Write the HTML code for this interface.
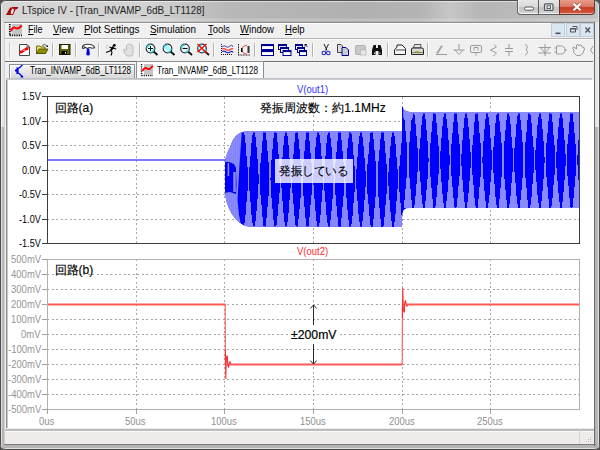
<!DOCTYPE html>
<html><head><meta charset="utf-8">
<style>
*{margin:0;padding:0;box-sizing:border-box}
html,body{width:600px;height:450px;overflow:hidden;background:#4a4a4a}
body{position:relative;font-family:"Liberation Sans",sans-serif;}
.a{position:absolute}
.t{position:absolute;white-space:pre;transform-origin:0 0}
</style></head><body>
<div class="a" style="left:0;top:0;width:600px;height:450px;background:linear-gradient(90deg,#d6d6d6,#d2d2d2 25%,#b8b8b8 38%,#b0b0b0 60%,#b4b4b4 70%,#c6c6c6 75%,#b6b6b6 80%,#bcbcbc 90%,#c4c4c4);border-radius:6px"></div>
<div class="a" style="left:0;top:0;width:600px;height:450px;background:linear-gradient(rgba(255,255,255,0) 0px,rgba(255,255,255,0) 18px,rgba(255,255,255,0.3) 20px,rgba(255,255,255,0) 21px);"></div>
<div class="a" style="left:0;top:22px;width:600px;height:428px;background:linear-gradient(#e4e4e4,#e4e4e4 105px,#b6b6b6 105px);border-radius:0 0 6px 6px"></div>
<div class="a" style="left:0;top:0;width:600px;height:450px;border:1px solid #4c4c4c;border-radius:6px"></div>
<div class="a" style="left:1px;top:1px;width:598px;height:448px;border:1px solid rgba(255,255,255,0.55);border-radius:5px"></div>
<div class="a" style="left:4px;top:22px;width:591px;height:423px;border:1px solid #6e6e6e;border-left-color:#d0d0d0;border-top-color:#8e8e8e"></div><div class="a" style="left:5px;top:22px;width:1px;height:423px;background:#707070"></div>
<div class="a" style="left:5px;top:23px;width:590px;height:422px;background:#f0f0f0"></div>
<div class="a" style="left:5px;top:23px;width:590px;height:1px;background:#fbfbfb"></div>
<div class="a" style="left:5px;top:38px;width:590px;height:1px;background:#b4b4b4"></div>
<div class="a" style="left:5px;top:39px;width:590px;height:1px;background:#fafafa"></div>
<div class="a" style="left:5px;top:61px;width:588px;height:1px;background:#6e6e6e"></div>
<div class="a" style="left:5px;top:62px;width:590px;height:1px;background:#fafafa"></div>
<div class="a" style="left:9px;top:64px;width:126px;height:14px;background:linear-gradient(#f6f6f6,#e6e6e6 50%,#d8d8d8);border:1px solid #8a8e96;border-bottom:none;box-shadow:inset 1px 1px 0 #fff"></div>
<div class="a" style="left:136px;top:61px;width:128px;height:17px;background:#fff;border:1px solid #8a8e96;border-bottom:none"></div>
<div class="a" style="left:6px;top:78px;width:586px;height:2px;background:linear-gradient(#b8bcc0,#d0d3d6)"></div>
<div class="a" style="left:6px;top:80px;width:588px;height:348px;background:#fff"></div>
<div class="a" style="left:6px;top:80px;width:1px;height:348px;background:#8a8a8a"></div><div class="a" style="left:7px;top:80px;width:1px;height:348px;background:#cacaca"></div>
<div class="a" style="left:594px;top:22px;width:1px;height:424px;background:#6a6a6a"></div>
<div class="a" style="left:5px;top:428px;width:589px;height:1px;background:#ececec"></div>
<div class="a" style="left:5px;top:429px;width:589px;height:2px;background:linear-gradient(#b4b4b4,#c4c4c4)"></div>
<div class="a" style="left:5px;top:431px;width:589px;height:1px;background:#f8f8f8"></div>
<div class="a" style="left:5px;top:432px;width:589px;height:12px;background:#efebeb"></div>
<div class="a" style="left:4px;top:444px;width:592px;height:1px;background:#7a7a7a"></div>
<div class="a" style="left:1px;top:446px;width:598px;height:2px;background:#b4b4b4"></div>
<div class="a" style="left:579px;top:430px;width:1px;height:14px;background:#d4d4d4"></div>
<!-- mdi buttons -->
<div class="a" style="left:551px;top:23px;width:14px;height:14px;background:#dbe6f3;border:1px solid #c0ccd8"></div>
<div class="a" style="left:566px;top:23px;width:14px;height:14px;background:#dbe6f3;border:1px solid #c0ccd8"></div>
<div class="a" style="left:580px;top:23px;width:14px;height:14px;background:#dbe6f3;border:1px solid #c0ccd8"></div>
<!-- caption buttons -->
<div class="a" style="left:517px;top:0px;width:43px;height:15px;background:linear-gradient(#e6e6e6,#dadada 45%,#c4c4c4 55%,#d4d4d4);border:1px solid #606060;border-top:none;border-radius:0 0 0 4px;box-shadow:inset 1px -1px 0 #f4f4f4"></div>
<div class="a" style="left:538px;top:0px;width:1px;height:14px;background:#606060"></div>
<div class="a" style="left:559px;top:0px;width:36px;height:15px;background:linear-gradient(#e89a8a,#dc7a68 45%,#c83c22 55%,#d05a40);border:1px solid #5a3a34;border-top:none;border-radius:0 0 4px 0;box-shadow:inset 0 -1px 0 #f0b0a0"></div>
<svg class="a" style="left:0;top:0" width="600" height="450" viewBox="0 0 600 450">
<line x1="48" y1="121.5" x2="579" y2="121.5" stroke="#a8a8a8" stroke-width="1" stroke-dasharray="2 2 2 3" stroke-dashoffset="5"/>
<line x1="48" y1="145.5" x2="579" y2="145.5" stroke="#a8a8a8" stroke-width="1" stroke-dasharray="2 2 2 3" stroke-dashoffset="5"/>
<line x1="48" y1="170.5" x2="579" y2="170.5" stroke="#a8a8a8" stroke-width="1" stroke-dasharray="2 2 2 3" stroke-dashoffset="5"/>
<line x1="48" y1="194.5" x2="579" y2="194.5" stroke="#a8a8a8" stroke-width="1" stroke-dasharray="2 2 2 3" stroke-dashoffset="5"/>
<line x1="48" y1="219.5" x2="579" y2="219.5" stroke="#a8a8a8" stroke-width="1" stroke-dasharray="2 2 2 3" stroke-dashoffset="5"/>
<line x1="136.5" y1="97" x2="136.5" y2="243" stroke="#a8a8a8" stroke-width="1" stroke-dasharray="2 3 2 2"/>
<line x1="224.5" y1="97" x2="224.5" y2="243" stroke="#a8a8a8" stroke-width="1" stroke-dasharray="2 3 2 2"/>
<line x1="313.5" y1="97" x2="313.5" y2="243" stroke="#a8a8a8" stroke-width="1" stroke-dasharray="2 3 2 2"/>
<line x1="402.5" y1="97" x2="402.5" y2="243" stroke="#a8a8a8" stroke-width="1" stroke-dasharray="2 3 2 2"/>
<line x1="490.5" y1="97" x2="490.5" y2="243" stroke="#a8a8a8" stroke-width="1" stroke-dasharray="2 3 2 2"/>
<line x1="136.5" y1="259" x2="136.5" y2="409" stroke="#a8a8a8" stroke-width="1" stroke-dasharray="2 3 2 2"/>
<line x1="224.5" y1="259" x2="224.5" y2="409" stroke="#a8a8a8" stroke-width="1" stroke-dasharray="2 3 2 2"/>
<line x1="313.5" y1="259" x2="313.5" y2="409" stroke="#a8a8a8" stroke-width="1" stroke-dasharray="2 3 2 2"/>
<line x1="402.5" y1="259" x2="402.5" y2="409" stroke="#a8a8a8" stroke-width="1" stroke-dasharray="2 3 2 2"/>
<line x1="490.5" y1="259" x2="490.5" y2="409" stroke="#a8a8a8" stroke-width="1" stroke-dasharray="2 3 2 2"/>
<line x1="48" y1="274.5" x2="579" y2="274.5" stroke="#a8a8a8" stroke-width="1" stroke-dasharray="2 2 2 3" stroke-dashoffset="5"/>
<line x1="48" y1="289.5" x2="579" y2="289.5" stroke="#a8a8a8" stroke-width="1" stroke-dasharray="2 2 2 3" stroke-dashoffset="5"/>
<line x1="48" y1="304.5" x2="579" y2="304.5" stroke="#a8a8a8" stroke-width="1" stroke-dasharray="2 2 2 3" stroke-dashoffset="5"/>
<line x1="48" y1="319.5" x2="579" y2="319.5" stroke="#a8a8a8" stroke-width="1" stroke-dasharray="2 2 2 3" stroke-dashoffset="5"/>
<line x1="48" y1="334.5" x2="579" y2="334.5" stroke="#a8a8a8" stroke-width="1" stroke-dasharray="2 2 2 3" stroke-dashoffset="5"/>
<line x1="48" y1="349.5" x2="579" y2="349.5" stroke="#a8a8a8" stroke-width="1" stroke-dasharray="2 2 2 3" stroke-dashoffset="5"/>
<line x1="48" y1="364.5" x2="579" y2="364.5" stroke="#a8a8a8" stroke-width="1" stroke-dasharray="2 2 2 3" stroke-dashoffset="5"/>
<line x1="48" y1="379.5" x2="579" y2="379.5" stroke="#a8a8a8" stroke-width="1" stroke-dasharray="2 2 2 3" stroke-dashoffset="5"/>
<line x1="48" y1="394.5" x2="579" y2="394.5" stroke="#a8a8a8" stroke-width="1" stroke-dasharray="2 2 2 3" stroke-dashoffset="5"/>
<defs><clipPath id="envA"><path d="M225,159.5 L228,151 L230,147 L231.3,143.5 L233,139.6 L235,137 L236.7,135 L239.3,133.3 L241,132.3 L244,131.6 L249,131 L402,131 L402,227 L248.8,226.8 L244,225.8 L239.2,222.6 L236,219.4 L232,214.6 L228.8,208.2 L226.4,201.8 L225,195 Z"/></clipPath><clipPath id="envB"><path d="M402,131 L402,107 L403,107 L404,110 L407,111 L410,112 L579,112 L579,208 L412,208 L406,208.5 L403.5,210.5 L402.5,214 L402,227 Z"/></clipPath></defs>
<g clip-path="url(#envA)"><path d="M225,159.5 L228,151 L230,147 L231.3,143.5 L233,139.6 L235,137 L236.7,135 L239.3,133.3 L241,132.3 L244,131.6 L249,131 L402,131 L402,227 L248.8,226.8 L244,225.8 L239.2,222.6 L236,219.4 L232,214.6 L228.8,208.2 L226.4,201.8 L225,195 Z" fill="#0000ff"/><path fill="#8a8aff" d="M244,131 h1 v4 h-1 Z M244,223 h1 v4 h-1 Z M245,131 h1 v12 h-1 Z M245,215 h1 v12 h-1 Z M246,131 h1 v25 h-1 Z M246,202 h1 v25 h-1 Z M247,131 h1 v36 h-1 Z M247,191 h1 v36 h-1 Z M248,131 h1 v48 h-1 Z M248,179 h1 v48 h-1 Z M249,131 h1 v36 h-1 Z M249,191 h1 v36 h-1 Z M250,131 h1 v25 h-1 Z M250,202 h1 v25 h-1 Z M251,131 h1 v12 h-1 Z M251,215 h1 v12 h-1 Z M252,131 h1 v4 h-1 Z M252,223 h1 v4 h-1 Z M255,131 h1 v6 h-1 Z M255,221 h1 v6 h-1 Z M256,131 h1 v16 h-1 Z M256,211 h1 v16 h-1 Z M257,131 h1 v28 h-1 Z M257,199 h1 v28 h-1 Z M258,131 h1 v43 h-1 Z M258,184 h1 v43 h-1 Z M259,131 h1 v48 h-1 Z M259,179 h1 v48 h-1 Z M260,131 h1 v32 h-1 Z M260,195 h1 v32 h-1 Z M261,131 h1 v22 h-1 Z M261,205 h1 v22 h-1 Z M262,131 h1 v10 h-1 Z M262,217 h1 v10 h-1 Z M263,131 h1 v1 h-1 Z M263,226 h1 v1 h-1 Z M266,131 h1 v9 h-1 Z M266,218 h1 v9 h-1 Z M267,131 h1 v20 h-1 Z M267,207 h1 v20 h-1 Z M268,131 h1 v31 h-1 Z M268,196 h1 v31 h-1 Z M269,131 h1 v48 h-1 Z M269,179 h1 v48 h-1 Z M270,131 h1 v47 h-1 Z M270,180 h1 v47 h-1 Z M271,131 h1 v29 h-1 Z M271,198 h1 v29 h-1 Z M272,131 h1 v18 h-1 Z M272,209 h1 v18 h-1 Z M273,131 h1 v7 h-1 Z M273,220 h1 v7 h-1 Z M276,131 h1 v2 h-1 Z M276,225 h1 v2 h-1 Z M277,131 h1 v11 h-1 Z M277,216 h1 v11 h-1 Z M278,131 h1 v23 h-1 Z M278,204 h1 v23 h-1 Z M279,131 h1 v34 h-1 Z M279,193 h1 v34 h-1 Z M280,131 h1 v48 h-1 Z M280,179 h1 v48 h-1 Z M281,131 h1 v39 h-1 Z M281,188 h1 v39 h-1 Z M282,131 h1 v26 h-1 Z M282,201 h1 v26 h-1 Z M283,131 h1 v14 h-1 Z M283,213 h1 v14 h-1 Z M284,131 h1 v5 h-1 Z M284,222 h1 v5 h-1 Z M287,131 h1 v5 h-1 Z M287,222 h1 v5 h-1 Z M288,131 h1 v14 h-1 Z M288,213 h1 v14 h-1 Z M289,131 h1 v27 h-1 Z M289,200 h1 v27 h-1 Z M290,131 h1 v39 h-1 Z M290,188 h1 v39 h-1 Z M291,131 h1 v48 h-1 Z M291,179 h1 v48 h-1 Z M292,131 h1 v34 h-1 Z M292,193 h1 v34 h-1 Z M293,131 h1 v23 h-1 Z M293,204 h1 v23 h-1 Z M294,131 h1 v11 h-1 Z M294,216 h1 v11 h-1 Z M295,131 h1 v2 h-1 Z M295,225 h1 v2 h-1 Z M298,131 h1 v8 h-1 Z M298,219 h1 v8 h-1 Z M299,131 h1 v18 h-1 Z M299,209 h1 v18 h-1 Z M300,131 h1 v29 h-1 Z M300,198 h1 v29 h-1 Z M301,131 h1 v48 h-1 Z M301,179 h1 v48 h-1 Z M302,131 h1 v48 h-1 Z M302,179 h1 v48 h-1 Z M303,131 h1 v31 h-1 Z M303,196 h1 v31 h-1 Z M304,131 h1 v20 h-1 Z M304,207 h1 v20 h-1 Z M305,131 h1 v9 h-1 Z M305,218 h1 v9 h-1 Z M308,131 h1 v1 h-1 Z M308,226 h1 v1 h-1 Z M309,131 h1 v10 h-1 Z M309,217 h1 v10 h-1 Z M310,131 h1 v22 h-1 Z M310,205 h1 v22 h-1 Z M311,131 h1 v32 h-1 Z M311,195 h1 v32 h-1 Z M312,131 h1 v48 h-1 Z M312,179 h1 v48 h-1 Z M313,131 h1 v42 h-1 Z M313,185 h1 v42 h-1 Z M314,131 h1 v28 h-1 Z M314,199 h1 v28 h-1 Z M315,131 h1 v16 h-1 Z M315,211 h1 v16 h-1 Z M316,131 h1 v6 h-1 Z M316,221 h1 v6 h-1 Z M319,131 h1 v4 h-1 Z M319,223 h1 v4 h-1 Z M320,131 h1 v12 h-1 Z M320,215 h1 v12 h-1 Z M321,131 h1 v25 h-1 Z M321,202 h1 v25 h-1 Z M322,131 h1 v37 h-1 Z M322,190 h1 v37 h-1 Z M323,131 h1 v48 h-1 Z M323,179 h1 v48 h-1 Z M324,131 h1 v36 h-1 Z M324,191 h1 v36 h-1 Z M325,131 h1 v25 h-1 Z M325,202 h1 v25 h-1 Z M326,131 h1 v12 h-1 Z M326,215 h1 v12 h-1 Z M327,131 h1 v4 h-1 Z M327,223 h1 v4 h-1 Z M330,131 h1 v7 h-1 Z M330,220 h1 v7 h-1 Z M331,131 h1 v16 h-1 Z M331,211 h1 v16 h-1 Z M332,131 h1 v28 h-1 Z M332,199 h1 v28 h-1 Z M333,131 h1 v44 h-1 Z M333,183 h1 v44 h-1 Z M334,131 h1 v48 h-1 Z M334,179 h1 v48 h-1 Z M335,131 h1 v32 h-1 Z M335,195 h1 v32 h-1 Z M336,131 h1 v21 h-1 Z M336,206 h1 v21 h-1 Z M337,131 h1 v10 h-1 Z M337,217 h1 v10 h-1 Z M338,131 h1 v0 h-1 Z M338,227 h1 v0 h-1 Z M341,131 h1 v9 h-1 Z M341,218 h1 v9 h-1 Z M342,131 h1 v20 h-1 Z M342,207 h1 v20 h-1 Z M343,131 h1 v31 h-1 Z M343,196 h1 v31 h-1 Z M344,131 h1 v48 h-1 Z M344,179 h1 v48 h-1 Z M345,131 h1 v46 h-1 Z M345,181 h1 v46 h-1 Z M346,131 h1 v29 h-1 Z M346,198 h1 v29 h-1 Z M347,131 h1 v17 h-1 Z M347,210 h1 v17 h-1 Z M348,131 h1 v7 h-1 Z M348,220 h1 v7 h-1 Z M351,131 h1 v3 h-1 Z M351,224 h1 v3 h-1 Z M352,131 h1 v11 h-1 Z M352,216 h1 v11 h-1 Z M353,131 h1 v24 h-1 Z M353,203 h1 v24 h-1 Z M354,131 h1 v35 h-1 Z M354,192 h1 v35 h-1 Z M355,131 h1 v48 h-1 Z M355,179 h1 v48 h-1 Z M356,131 h1 v38 h-1 Z M356,189 h1 v38 h-1 Z M357,131 h1 v26 h-1 Z M357,201 h1 v26 h-1 Z M358,131 h1 v13 h-1 Z M358,214 h1 v13 h-1 Z M359,131 h1 v5 h-1 Z M359,222 h1 v5 h-1 Z M362,131 h1 v6 h-1 Z M362,221 h1 v6 h-1 Z M363,131 h1 v15 h-1 Z M363,212 h1 v15 h-1 Z M364,131 h1 v27 h-1 Z M364,200 h1 v27 h-1 Z M365,131 h1 v40 h-1 Z M365,187 h1 v40 h-1 Z M366,131 h1 v48 h-1 Z M366,179 h1 v48 h-1 Z M367,131 h1 v33 h-1 Z M367,194 h1 v33 h-1 Z M368,131 h1 v23 h-1 Z M368,204 h1 v23 h-1 Z M369,131 h1 v11 h-1 Z M369,216 h1 v11 h-1 Z M370,131 h1 v2 h-1 Z M370,225 h1 v2 h-1 Z M373,131 h1 v8 h-1 Z M373,219 h1 v8 h-1 Z M374,131 h1 v19 h-1 Z M374,208 h1 v19 h-1 Z M375,131 h1 v30 h-1 Z M375,197 h1 v30 h-1 Z M376,131 h1 v48 h-1 Z M376,179 h1 v48 h-1 Z M377,131 h1 v48 h-1 Z M377,179 h1 v48 h-1 Z M378,131 h1 v30 h-1 Z M378,197 h1 v30 h-1 Z M379,131 h1 v19 h-1 Z M379,208 h1 v19 h-1 Z M380,131 h1 v8 h-1 Z M380,219 h1 v8 h-1 Z M383,131 h1 v1 h-1 Z M383,226 h1 v1 h-1 Z M384,131 h1 v10 h-1 Z M384,217 h1 v10 h-1 Z M385,131 h1 v22 h-1 Z M385,205 h1 v22 h-1 Z M386,131 h1 v33 h-1 Z M386,194 h1 v33 h-1 Z M387,131 h1 v48 h-1 Z M387,179 h1 v48 h-1 Z M388,131 h1 v41 h-1 Z M388,186 h1 v41 h-1 Z M389,131 h1 v27 h-1 Z M389,200 h1 v27 h-1 Z M390,131 h1 v15 h-1 Z M390,212 h1 v15 h-1 Z M391,131 h1 v6 h-1 Z M391,221 h1 v6 h-1 Z M394,131 h1 v5 h-1 Z M394,222 h1 v5 h-1 Z M395,131 h1 v13 h-1 Z M395,214 h1 v13 h-1 Z M396,131 h1 v26 h-1 Z M396,201 h1 v26 h-1 Z M397,131 h1 v38 h-1 Z M397,189 h1 v38 h-1 Z M398,131 h1 v48 h-1 Z M398,179 h1 v48 h-1 Z M399,131 h1 v35 h-1 Z M399,192 h1 v35 h-1 Z M400,131 h1 v24 h-1 Z M400,203 h1 v24 h-1 Z M401,131 h1 v12 h-1 Z M401,215 h1 v12 h-1 Z M402,131 h1 v3 h-1 Z M402,224 h1 v3 h-1 Z M224,125 L242,125 L241.5,137 L240.5,150 L239.5,165 L237.5,200 L239,215 L242,230 L224,230 L224,193 L230,192 L236,194 L236.5,185 L236,168 L234,164 L229,162 L224,162 Z M227.6,163 L229.2,163 L229.2,176 L227.6,176 Z M233.2,172 L235.8,172 L235.8,192 L233.2,192 Z M240,131 H402 V132.6 H240 Z"/><path fill="#000" opacity="0.045" d="M225,100 h1 V230 h-1 Z M227,100 h1 V230 h-1 Z M229,100 h1 V230 h-1 Z M231,100 h1 V230 h-1 Z M233,100 h1 V230 h-1 Z M235,100 h1 V230 h-1 Z M237,100 h1 V230 h-1 Z M239,100 h1 V230 h-1 Z M241,100 h1 V230 h-1 Z M243,100 h1 V230 h-1 Z M245,100 h1 V230 h-1 Z M247,100 h1 V230 h-1 Z M249,100 h1 V230 h-1 Z M251,100 h1 V230 h-1 Z M253,100 h1 V230 h-1 Z M255,100 h1 V230 h-1 Z M257,100 h1 V230 h-1 Z M259,100 h1 V230 h-1 Z M261,100 h1 V230 h-1 Z M263,100 h1 V230 h-1 Z M265,100 h1 V230 h-1 Z M267,100 h1 V230 h-1 Z M269,100 h1 V230 h-1 Z M271,100 h1 V230 h-1 Z M273,100 h1 V230 h-1 Z M275,100 h1 V230 h-1 Z M277,100 h1 V230 h-1 Z M279,100 h1 V230 h-1 Z M281,100 h1 V230 h-1 Z M283,100 h1 V230 h-1 Z M285,100 h1 V230 h-1 Z M287,100 h1 V230 h-1 Z M289,100 h1 V230 h-1 Z M291,100 h1 V230 h-1 Z M293,100 h1 V230 h-1 Z M295,100 h1 V230 h-1 Z M297,100 h1 V230 h-1 Z M299,100 h1 V230 h-1 Z M301,100 h1 V230 h-1 Z M303,100 h1 V230 h-1 Z M305,100 h1 V230 h-1 Z M307,100 h1 V230 h-1 Z M309,100 h1 V230 h-1 Z M311,100 h1 V230 h-1 Z M313,100 h1 V230 h-1 Z M315,100 h1 V230 h-1 Z M317,100 h1 V230 h-1 Z M319,100 h1 V230 h-1 Z M321,100 h1 V230 h-1 Z M323,100 h1 V230 h-1 Z M325,100 h1 V230 h-1 Z M327,100 h1 V230 h-1 Z M329,100 h1 V230 h-1 Z M331,100 h1 V230 h-1 Z M333,100 h1 V230 h-1 Z M335,100 h1 V230 h-1 Z M337,100 h1 V230 h-1 Z M339,100 h1 V230 h-1 Z M341,100 h1 V230 h-1 Z M343,100 h1 V230 h-1 Z M345,100 h1 V230 h-1 Z M347,100 h1 V230 h-1 Z M349,100 h1 V230 h-1 Z M351,100 h1 V230 h-1 Z M353,100 h1 V230 h-1 Z M355,100 h1 V230 h-1 Z M357,100 h1 V230 h-1 Z M359,100 h1 V230 h-1 Z M361,100 h1 V230 h-1 Z M363,100 h1 V230 h-1 Z M365,100 h1 V230 h-1 Z M367,100 h1 V230 h-1 Z M369,100 h1 V230 h-1 Z M371,100 h1 V230 h-1 Z M373,100 h1 V230 h-1 Z M375,100 h1 V230 h-1 Z M377,100 h1 V230 h-1 Z M379,100 h1 V230 h-1 Z M381,100 h1 V230 h-1 Z M383,100 h1 V230 h-1 Z M385,100 h1 V230 h-1 Z M387,100 h1 V230 h-1 Z M389,100 h1 V230 h-1 Z M391,100 h1 V230 h-1 Z M393,100 h1 V230 h-1 Z M395,100 h1 V230 h-1 Z M397,100 h1 V230 h-1 Z M399,100 h1 V230 h-1 Z M401,100 h1 V230 h-1 Z"/></g>
<g clip-path="url(#envB)"><path d="M402,131 L402,107 L403,107 L404,110 L407,111 L410,112 L579,112 L579,208 L412,208 L406,208.5 L403.5,210.5 L402.5,214 L402,227 Z" fill="#0000ff"/><path fill="#8a8aff" d="M404,112 h1 v8 h-1 Z M404,200 h1 v8 h-1 Z M405,112 h1 v19 h-1 Z M405,189 h1 v19 h-1 Z M406,112 h1 v30 h-1 Z M406,178 h1 v30 h-1 Z M407,112 h1 v48 h-1 Z M407,160 h1 v48 h-1 Z M408,112 h1 v48 h-1 Z M408,160 h1 v48 h-1 Z M409,112 h1 v30 h-1 Z M409,178 h1 v30 h-1 Z M410,112 h1 v19 h-1 Z M410,189 h1 v19 h-1 Z M411,112 h1 v8 h-1 Z M411,200 h1 v8 h-1 Z M414,112 h1 v3 h-1 Z M414,205 h1 v3 h-1 Z M415,112 h1 v12 h-1 Z M415,196 h1 v12 h-1 Z M416,112 h1 v24 h-1 Z M416,184 h1 v24 h-1 Z M417,112 h1 v36 h-1 Z M417,172 h1 v36 h-1 Z M418,112 h1 v48 h-1 Z M418,160 h1 v48 h-1 Z M419,112 h1 v37 h-1 Z M419,171 h1 v37 h-1 Z M420,112 h1 v26 h-1 Z M420,182 h1 v26 h-1 Z M421,112 h1 v13 h-1 Z M421,195 h1 v13 h-1 Z M422,112 h1 v4 h-1 Z M422,204 h1 v4 h-1 Z M425,112 h1 v7 h-1 Z M425,201 h1 v7 h-1 Z M426,112 h1 v18 h-1 Z M426,190 h1 v18 h-1 Z M427,112 h1 v29 h-1 Z M427,179 h1 v29 h-1 Z M428,112 h1 v46 h-1 Z M428,162 h1 v46 h-1 Z M429,112 h1 v48 h-1 Z M429,160 h1 v48 h-1 Z M430,112 h1 v31 h-1 Z M430,177 h1 v31 h-1 Z M431,112 h1 v20 h-1 Z M431,188 h1 v20 h-1 Z M432,112 h1 v9 h-1 Z M432,199 h1 v9 h-1 Z M435,112 h1 v2 h-1 Z M435,206 h1 v2 h-1 Z M436,112 h1 v11 h-1 Z M436,197 h1 v11 h-1 Z M437,112 h1 v23 h-1 Z M437,185 h1 v23 h-1 Z M438,112 h1 v34 h-1 Z M438,174 h1 v34 h-1 Z M439,112 h1 v48 h-1 Z M439,160 h1 v48 h-1 Z M440,112 h1 v39 h-1 Z M440,169 h1 v39 h-1 Z M441,112 h1 v26 h-1 Z M441,182 h1 v26 h-1 Z M442,112 h1 v14 h-1 Z M442,194 h1 v14 h-1 Z M443,112 h1 v5 h-1 Z M443,203 h1 v5 h-1 Z M446,112 h1 v7 h-1 Z M446,201 h1 v7 h-1 Z M447,112 h1 v16 h-1 Z M447,192 h1 v16 h-1 Z M448,112 h1 v28 h-1 Z M448,180 h1 v28 h-1 Z M449,112 h1 v43 h-1 Z M449,165 h1 v43 h-1 Z M450,112 h1 v48 h-1 Z M450,160 h1 v48 h-1 Z M451,112 h1 v32 h-1 Z M451,176 h1 v32 h-1 Z M452,112 h1 v21 h-1 Z M452,187 h1 v21 h-1 Z M453,112 h1 v10 h-1 Z M453,198 h1 v10 h-1 Z M454,112 h1 v1 h-1 Z M454,207 h1 v1 h-1 Z M456,112 h1 v1 h-1 Z M456,207 h1 v1 h-1 Z M457,112 h1 v10 h-1 Z M457,198 h1 v10 h-1 Z M458,112 h1 v22 h-1 Z M458,186 h1 v22 h-1 Z M459,112 h1 v32 h-1 Z M459,176 h1 v32 h-1 Z M460,112 h1 v48 h-1 Z M460,160 h1 v48 h-1 Z M461,112 h1 v42 h-1 Z M461,166 h1 v42 h-1 Z M462,112 h1 v28 h-1 Z M462,180 h1 v28 h-1 Z M463,112 h1 v16 h-1 Z M463,192 h1 v16 h-1 Z M464,112 h1 v6 h-1 Z M464,202 h1 v6 h-1 Z M467,112 h1 v6 h-1 Z M467,202 h1 v6 h-1 Z M468,112 h1 v15 h-1 Z M468,193 h1 v15 h-1 Z M469,112 h1 v27 h-1 Z M469,181 h1 v27 h-1 Z M470,112 h1 v40 h-1 Z M470,168 h1 v40 h-1 Z M471,112 h1 v48 h-1 Z M471,160 h1 v48 h-1 Z M472,112 h1 v33 h-1 Z M472,175 h1 v33 h-1 Z M473,112 h1 v23 h-1 Z M473,185 h1 v23 h-1 Z M474,112 h1 v10 h-1 Z M474,198 h1 v10 h-1 Z M475,112 h1 v2 h-1 Z M475,206 h1 v2 h-1 Z M478,112 h1 v9 h-1 Z M478,199 h1 v9 h-1 Z M479,112 h1 v21 h-1 Z M479,187 h1 v21 h-1 Z M480,112 h1 v31 h-1 Z M480,177 h1 v31 h-1 Z M481,112 h1 v48 h-1 Z M481,160 h1 v48 h-1 Z M482,112 h1 v45 h-1 Z M482,163 h1 v45 h-1 Z M483,112 h1 v29 h-1 Z M483,179 h1 v29 h-1 Z M484,112 h1 v17 h-1 Z M484,191 h1 v17 h-1 Z M485,112 h1 v7 h-1 Z M485,201 h1 v7 h-1 Z M488,112 h1 v5 h-1 Z M488,203 h1 v5 h-1 Z M489,112 h1 v13 h-1 Z M489,195 h1 v13 h-1 Z M490,112 h1 v26 h-1 Z M490,182 h1 v26 h-1 Z M491,112 h1 v38 h-1 Z M491,170 h1 v38 h-1 Z M492,112 h1 v48 h-1 Z M492,160 h1 v48 h-1 Z M493,112 h1 v35 h-1 Z M493,173 h1 v35 h-1 Z M494,112 h1 v24 h-1 Z M494,184 h1 v24 h-1 Z M495,112 h1 v11 h-1 Z M495,197 h1 v11 h-1 Z M496,112 h1 v3 h-1 Z M496,205 h1 v3 h-1 Z M499,112 h1 v9 h-1 Z M499,199 h1 v9 h-1 Z M500,112 h1 v20 h-1 Z M500,188 h1 v20 h-1 Z M501,112 h1 v31 h-1 Z M501,177 h1 v31 h-1 Z M502,112 h1 v48 h-1 Z M502,160 h1 v48 h-1 Z M503,112 h1 v48 h-1 Z M503,160 h1 v48 h-1 Z M504,112 h1 v29 h-1 Z M504,179 h1 v29 h-1 Z M505,112 h1 v18 h-1 Z M505,190 h1 v18 h-1 Z M506,112 h1 v8 h-1 Z M506,200 h1 v8 h-1 Z M509,112 h1 v4 h-1 Z M509,204 h1 v4 h-1 Z M510,112 h1 v12 h-1 Z M510,196 h1 v12 h-1 Z M511,112 h1 v25 h-1 Z M511,183 h1 v25 h-1 Z M512,112 h1 v36 h-1 Z M512,172 h1 v36 h-1 Z M513,112 h1 v48 h-1 Z M513,160 h1 v48 h-1 Z M514,112 h1 v36 h-1 Z M514,172 h1 v36 h-1 Z M515,112 h1 v25 h-1 Z M515,183 h1 v25 h-1 Z M516,112 h1 v12 h-1 Z M516,196 h1 v12 h-1 Z M517,112 h1 v4 h-1 Z M517,204 h1 v4 h-1 Z M520,112 h1 v8 h-1 Z M520,200 h1 v8 h-1 Z M521,112 h1 v18 h-1 Z M521,190 h1 v18 h-1 Z M522,112 h1 v30 h-1 Z M522,178 h1 v30 h-1 Z M523,112 h1 v48 h-1 Z M523,160 h1 v48 h-1 Z M524,112 h1 v48 h-1 Z M524,160 h1 v48 h-1 Z M525,112 h1 v30 h-1 Z M525,178 h1 v30 h-1 Z M526,112 h1 v20 h-1 Z M526,188 h1 v20 h-1 Z M527,112 h1 v8 h-1 Z M527,200 h1 v8 h-1 Z M530,112 h1 v3 h-1 Z M530,205 h1 v3 h-1 Z M531,112 h1 v11 h-1 Z M531,197 h1 v11 h-1 Z M532,112 h1 v24 h-1 Z M532,184 h1 v24 h-1 Z M533,112 h1 v35 h-1 Z M533,173 h1 v35 h-1 Z M534,112 h1 v48 h-1 Z M534,160 h1 v48 h-1 Z M535,112 h1 v38 h-1 Z M535,170 h1 v38 h-1 Z M536,112 h1 v26 h-1 Z M536,182 h1 v26 h-1 Z M537,112 h1 v13 h-1 Z M537,195 h1 v13 h-1 Z M538,112 h1 v5 h-1 Z M538,203 h1 v5 h-1 Z M541,112 h1 v7 h-1 Z M541,201 h1 v7 h-1 Z M542,112 h1 v17 h-1 Z M542,191 h1 v17 h-1 Z M543,112 h1 v29 h-1 Z M543,179 h1 v29 h-1 Z M544,112 h1 v45 h-1 Z M544,163 h1 v45 h-1 Z M545,112 h1 v48 h-1 Z M545,160 h1 v48 h-1 Z M546,112 h1 v31 h-1 Z M546,177 h1 v31 h-1 Z M547,112 h1 v21 h-1 Z M547,187 h1 v21 h-1 Z M548,112 h1 v9 h-1 Z M548,199 h1 v9 h-1 Z M551,112 h1 v2 h-1 Z M551,206 h1 v2 h-1 Z M552,112 h1 v10 h-1 Z M552,198 h1 v10 h-1 Z M553,112 h1 v23 h-1 Z M553,185 h1 v23 h-1 Z M554,112 h1 v33 h-1 Z M554,175 h1 v33 h-1 Z M555,112 h1 v48 h-1 Z M555,160 h1 v48 h-1 Z M556,112 h1 v40 h-1 Z M556,168 h1 v40 h-1 Z M557,112 h1 v27 h-1 Z M557,181 h1 v27 h-1 Z M558,112 h1 v15 h-1 Z M558,193 h1 v15 h-1 Z M559,112 h1 v6 h-1 Z M559,202 h1 v6 h-1 Z M562,112 h1 v6 h-1 Z M562,202 h1 v6 h-1 Z M563,112 h1 v16 h-1 Z M563,192 h1 v16 h-1 Z M564,112 h1 v28 h-1 Z M564,180 h1 v28 h-1 Z M565,112 h1 v42 h-1 Z M565,166 h1 v42 h-1 Z M566,112 h1 v48 h-1 Z M566,160 h1 v48 h-1 Z M567,112 h1 v32 h-1 Z M567,176 h1 v32 h-1 Z M568,112 h1 v22 h-1 Z M568,186 h1 v22 h-1 Z M569,112 h1 v10 h-1 Z M569,198 h1 v10 h-1 Z M570,112 h1 v1 h-1 Z M570,207 h1 v1 h-1 Z M572,112 h1 v1 h-1 Z M572,207 h1 v1 h-1 Z M573,112 h1 v10 h-1 Z M573,198 h1 v10 h-1 Z M574,112 h1 v21 h-1 Z M574,187 h1 v21 h-1 Z M575,112 h1 v32 h-1 Z M575,176 h1 v32 h-1 Z M576,112 h1 v48 h-1 Z M576,160 h1 v48 h-1 Z M577,112 h1 v43 h-1 Z M577,165 h1 v43 h-1 Z M578,112 h1 v28 h-1 Z M578,180 h1 v28 h-1 Z M579,112 h1 v16 h-1 Z M579,192 h1 v16 h-1 Z M580,112 h1 v7 h-1 Z M580,201 h1 v7 h-1 Z M403.2,107 L404,110 L407,111 L413,112 L413,118 L403.2,118 Z M403,112 H579 V113.6 H403 Z"/></g>
<line x1="48" y1="160" x2="225.5" y2="160" stroke="#5252ff" stroke-width="1.6"/>
<rect x="47.5" y="96.5" width="532" height="147" fill="none" stroke="#3c3c3c" stroke-width="1"/>
<line x1="42" y1="96.5" x2="47" y2="96.5" stroke="#3c3c3c"/>
<line x1="42" y1="121.5" x2="47" y2="121.5" stroke="#3c3c3c"/>
<line x1="42" y1="145.5" x2="47" y2="145.5" stroke="#3c3c3c"/>
<line x1="42" y1="170.5" x2="47" y2="170.5" stroke="#3c3c3c"/>
<line x1="42" y1="194.5" x2="47" y2="194.5" stroke="#3c3c3c"/>
<line x1="42" y1="219.5" x2="47" y2="219.5" stroke="#3c3c3c"/>
<line x1="42" y1="243.5" x2="47" y2="243.5" stroke="#3c3c3c"/>
<rect x="47.5" y="259.5" width="532" height="150" fill="none" stroke="#b0b0b0" stroke-width="1"/>
<line x1="42" y1="259.5" x2="47" y2="259.5" stroke="#a0a0a0"/>
<line x1="42" y1="274.5" x2="47" y2="274.5" stroke="#a0a0a0"/>
<line x1="42" y1="289.5" x2="47" y2="289.5" stroke="#a0a0a0"/>
<line x1="42" y1="304.5" x2="47" y2="304.5" stroke="#a0a0a0"/>
<line x1="42" y1="319.5" x2="47" y2="319.5" stroke="#a0a0a0"/>
<line x1="42" y1="334.5" x2="47" y2="334.5" stroke="#a0a0a0"/>
<line x1="42" y1="349.5" x2="47" y2="349.5" stroke="#a0a0a0"/>
<line x1="42" y1="364.5" x2="47" y2="364.5" stroke="#a0a0a0"/>
<line x1="42" y1="379.5" x2="47" y2="379.5" stroke="#a0a0a0"/>
<line x1="42" y1="394.5" x2="47" y2="394.5" stroke="#a0a0a0"/>
<line x1="42" y1="409.5" x2="47" y2="409.5" stroke="#a0a0a0"/>
<line x1="47.5" y1="409" x2="47.5" y2="414" stroke="#a0a0a0"/>
<line x1="136.5" y1="409" x2="136.5" y2="414" stroke="#a0a0a0"/>
<line x1="224.5" y1="409" x2="224.5" y2="414" stroke="#a0a0a0"/>
<line x1="313.5" y1="409" x2="313.5" y2="414" stroke="#a0a0a0"/>
<line x1="402.5" y1="409" x2="402.5" y2="414" stroke="#a0a0a0"/>
<line x1="490.5" y1="409" x2="490.5" y2="414" stroke="#a0a0a0"/>
<polyline fill="none" stroke="#ff5a5a" stroke-width="1.8" points="48,304.5 225.5,304.5"/>
<polyline fill="none" stroke="#ff5a5a" stroke-width="1.1" points="225.2,304 225.4,363"/>
<polyline fill="none" stroke="#ff2a2a" stroke-width="1.1" points="225.4,350 225.8,379 226.3,358 227.3,355.5 227.8,366 228.6,367 229.4,362 230.2,362 231,364"/>
<polyline fill="none" stroke="#ff5a5a" stroke-width="1.8" points="229,364.5 402.5,364.5"/>
<polyline fill="none" stroke="#ff5a5a" stroke-width="1.1" points="402.2,364 402.4,305"/>
<polyline fill="none" stroke="#ff2a2a" stroke-width="1.1" points="402.4,318 402.8,288 403.3,310 404.3,312.5 404.8,302 405.6,301 406.4,306 407.2,306 408,304"/>
<polyline fill="none" stroke="#ff5a5a" stroke-width="1.8" points="406,304.5 579,304.5"/>
<rect x="289" y="326" width="50" height="17" fill="#fff"/>
<g stroke="#282828" fill="none" stroke-width="1"><line x1="313.5" y1="305" x2="313.5" y2="325"/><polyline points="310.3,308.5 313.5,305 316.7,308.5"/><line x1="313.5" y1="344" x2="313.5" y2="364"/><polyline points="310.3,360.5 313.5,364 316.7,360.5"/></g>
<line x1="9.5" y1="42" x2="9.5" y2="58" stroke="#c8c8c8"/><line x1="10.5" y1="42" x2="10.5" y2="58" stroke="#fafafa"/>
<line x1="52.5" y1="43" x2="52.5" y2="57" stroke="#b4b4b4"/><line x1="53.5" y1="43" x2="53.5" y2="57" stroke="#ffffff"/>
<line x1="75.5" y1="43" x2="75.5" y2="57" stroke="#b4b4b4"/><line x1="76.5" y1="43" x2="76.5" y2="57" stroke="#ffffff"/>
<line x1="98.5" y1="43" x2="98.5" y2="57" stroke="#b4b4b4"/><line x1="99.5" y1="43" x2="99.5" y2="57" stroke="#ffffff"/>
<line x1="139.5" y1="43" x2="139.5" y2="57" stroke="#b4b4b4"/><line x1="140.5" y1="43" x2="140.5" y2="57" stroke="#ffffff"/>
<line x1="213.5" y1="43" x2="213.5" y2="57" stroke="#b4b4b4"/><line x1="214.5" y1="43" x2="214.5" y2="57" stroke="#ffffff"/>
<line x1="254.5" y1="43" x2="254.5" y2="57" stroke="#b4b4b4"/><line x1="255.5" y1="43" x2="255.5" y2="57" stroke="#ffffff"/>
<line x1="312.5" y1="43" x2="312.5" y2="57" stroke="#b4b4b4"/><line x1="313.5" y1="43" x2="313.5" y2="57" stroke="#ffffff"/>
<line x1="387.5" y1="43" x2="387.5" y2="57" stroke="#b4b4b4"/><line x1="388.5" y1="43" x2="388.5" y2="57" stroke="#ffffff"/>
<line x1="427.5" y1="43" x2="427.5" y2="57" stroke="#b4b4b4"/><line x1="428.5" y1="43" x2="428.5" y2="57" stroke="#ffffff"/>
<path d="M19.5,44.5 H27 L29.5,47 V55.5 H19.5 Z" fill="#fff" stroke="#484848" stroke-width="1"/><path d="M27,44.5 V47 H29.5" fill="none" stroke="#484848" stroke-width="0.8"/>
<path d="M20.5,52.5 L27.5,48.2" stroke="#f00" stroke-width="2.6"/><path d="M19.5,53.8 L20.2,50.2 L23,52.6 Z M28.8,46.8 L28.2,50.4 L25.4,48.2 Z" fill="#f00"/><path d="M22.8,50.6 L25.4,50" stroke="#fff" stroke-width="0.7"/>
<path d="M36.5,46 H40 L41,47 H45 V53.5 H36.5 Z" fill="#e8e060" stroke="#505000" stroke-width="0.8"/>
<path d="M36.5,53.5 L39,49 H48 L45.5,53.5 Z" fill="#909000" stroke="#404000" stroke-width="0.8"/>
<path d="M42,45.5 Q44.5,43.5 46.5,45.5" fill="none" stroke="#333" stroke-width="0.8"/><rect x="46.5" y="45.5" width="1.5" height="1.5" fill="#000"/>
<rect x="59.5" y="44.5" width="10.5" height="10" fill="#606000" stroke="#202000" stroke-width="1"/>
<rect x="61.5" y="45" width="6.5" height="4" fill="#fff"/><rect x="61.5" y="51" width="5.5" height="3.5" fill="#000"/><rect x="65" y="52" width="1" height="1.5" fill="#fff"/>
<path d="M82.5,48.2 C81.8,45.5 84,44.2 87.5,44.2 C91,44.2 94,45 94.6,47.8 L91.5,48.2 C90.5,47.3 88.8,47.3 88,48.2 L86.5,48.2 C85.8,47.2 84.5,47 83.8,48.4 Z" fill="#fff" stroke="#3a3a3a" stroke-width="1.1"/>
<path d="M82.6,46 C83.6,45.6 84.6,46.2 84.2,47.2" fill="none" stroke="#3a3a3a" stroke-width="0.8"/>
<path d="M87,48.6 H89.2 L89.9,54 Q90,55.6 88.1,55.6 Q86.2,55.6 86.3,54 Z" fill="#0000e0"/>
<circle cx="114.3" cy="45.3" r="1.4" fill="#000"/><path d="M113.5,46.5 L110.8,50.5" stroke="#000" stroke-width="2.2"/>
<path d="M112.5,48 L116.2,49 M112,48 L109.5,47 M111,50.5 L106,52.5 M111,50.5 L112,52.5 L111,55.5" fill="none" stroke="#000" stroke-width="1.1"/>
<path d="M106,45 L108.5,46.5 M105.5,47.5 L107.5,48.5" stroke="#b8b8b8" stroke-width="0.8"/>
<path d="M125,50 L123.5,49 L124.5,53 L127,56 H132 L133,53 V46 L131.5,45.5 V44.5 L129.5,44 L127.5,44.5 L126.5,46 V50 Z" fill="#e0e0e0" stroke="#b8b8b8" stroke-width="0.9"/>
<line x1="153.5" y1="51.5" x2="157.5" y2="55.0" stroke="#111" stroke-width="1.8"/><circle cx="150.5" cy="48.5" r="4.3" fill="#f4ffff" stroke="#2a2a2a" stroke-width="1.2"/><path d="M147.0,48.5 A3.5,3.5 0 0 1 150.5,45.0" stroke="#30e0f0" stroke-width="1.3" fill="none"/><path d="M154.0,48.5 A3.5,3.5 0 0 1 150.5,52.0" stroke="#30e0f0" stroke-width="1.3" fill="none"/><path d="M148,48.5 H153 M150.5,46 V51" stroke="#111" stroke-width="1"/>
<line x1="170.5" y1="51.5" x2="174.5" y2="55.0" stroke="#111" stroke-width="1.8"/><circle cx="167.5" cy="48.5" r="4.3" fill="#f4ffff" stroke="#2a2a2a" stroke-width="1.2"/><path d="M164.0,48.5 A3.5,3.5 0 0 1 167.5,45.0" stroke="#30e0f0" stroke-width="1.3" fill="none"/><path d="M171.0,48.5 A3.5,3.5 0 0 1 167.5,52.0" stroke="#30e0f0" stroke-width="1.3" fill="none"/><circle cx="167.5" cy="48.5" r="2.3" fill="#60f0f8" opacity="0.6"/>
<line x1="188" y1="51.5" x2="192" y2="55.0" stroke="#111" stroke-width="1.8"/><circle cx="185" cy="48.5" r="4.3" fill="#f4ffff" stroke="#2a2a2a" stroke-width="1.2"/><path d="M181.5,48.5 A3.5,3.5 0 0 1 185,45.0" stroke="#30e0f0" stroke-width="1.3" fill="none"/><path d="M188.5,48.5 A3.5,3.5 0 0 1 185,52.0" stroke="#30e0f0" stroke-width="1.3" fill="none"/><path d="M182.5,48.5 H187.5" stroke="#111" stroke-width="1.2"/>
<line x1="205" y1="51.5" x2="209" y2="55.0" stroke="#111" stroke-width="1.8"/><circle cx="202" cy="48.5" r="4.3" fill="#f4ffff" stroke="#2a2a2a" stroke-width="1.2"/><path d="M198.5,48.5 A3.5,3.5 0 0 1 202,45.0" stroke="#30e0f0" stroke-width="1.3" fill="none"/><path d="M205.5,48.5 A3.5,3.5 0 0 1 202,52.0" stroke="#30e0f0" stroke-width="1.3" fill="none"/><path d="M197.5,44 L207,53.5 M206.5,44 L197.5,52" stroke="#f00" stroke-width="1.3"/>
<path d="M221.5,44 V55 M221,54.5 H233" stroke="#111" stroke-width="1" stroke-dasharray="1 1"/>
<path d="M222,47 Q224,44.5 226,46.5 T230,46 T233,47" fill="none" stroke="#6040c0" stroke-width="1"/>
<path d="M222,49 Q224,48 226,49.5 T230,49.5 T233,49" fill="none" stroke="#ff3030" stroke-width="1.1"/>
<path d="M222,51.5 Q224,50.5 226,52 T230,52 T233,52.5" fill="none" stroke="#2020c0" stroke-width="1.1"/>
<path d="M238.5,44 V55 M238,55 H250" stroke="#111" stroke-width="1" stroke-dasharray="1 0.6"/>
<path d="M247,45 Q241,47 241.5,50 Q242,53 247,54.5" fill="none" stroke="#ff4040" stroke-width="1"/>
<rect x="241" y="48" width="1.6" height="4" fill="#111"/><rect x="247.5" y="46" width="2" height="7" fill="#333"/>
<rect x="261.5" y="44.5" width="12" height="5" fill="#fff" stroke="#000090" stroke-width="1"/><rect x="261.5" y="44.5" width="12" height="1.6" fill="#000090"/>
<rect x="261.5" y="50.5" width="12" height="5" fill="#fff" stroke="#000090" stroke-width="1"/><rect x="261.5" y="50.5" width="12" height="1.6" fill="#000090"/>
<rect x="278.5" y="44.5" width="8" height="5" fill="#fff" stroke="#000090" stroke-width="1"/><rect x="278.5" y="44.5" width="8" height="1.6" fill="#000090"/>
<rect x="280.5" y="47.5" width="8" height="5" fill="#fff" stroke="#000090" stroke-width="1"/><rect x="280.5" y="47.5" width="8" height="1.6" fill="#000090"/>
<rect x="283.0" y="50.5" width="8" height="5" fill="#fff" stroke="#000090" stroke-width="1"/><rect x="283.0" y="50.5" width="8" height="1.6" fill="#000090"/>
<rect x="295.5" y="44.5" width="7" height="5" fill="#fff" stroke="#000090" stroke-width="1"/><rect x="295.5" y="44.5" width="7" height="1.6" fill="#000090"/>
<rect x="297.5" y="47.5" width="7" height="5" fill="#fff" stroke="#000090" stroke-width="1"/><rect x="297.5" y="47.5" width="7" height="1.6" fill="#000090"/>
<rect x="299.5" y="50.5" width="7" height="5" fill="#fff" stroke="#000090" stroke-width="1"/><rect x="299.5" y="50.5" width="7" height="1.6" fill="#000090"/>
<path d="M305,44.5 L307.5,47 M305,44.5 H307 M305,44.5 V46.5" stroke="#111" stroke-width="0.9"/>
<path d="M324,44 L327,50.5 M328.5,44 L325.5,50.5" stroke="#222" stroke-width="1"/>
<circle cx="323.8" cy="53" r="1.8" fill="none" stroke="#2828c0" stroke-width="1.1"/><circle cx="328.3" cy="53" r="1.8" fill="none" stroke="#2828c0" stroke-width="1.1"/>
<path d="M337.5,44.5 H341 L342.5,46 V52.5 H337.5 Z" fill="#ddd" stroke="#333" stroke-width="0.9"/>
<path d="M342,47.5 H346 L348.5,50 V55.5 H342 Z" fill="#ccc" stroke="#0000a0" stroke-width="1"/>
<rect x="355.5" y="45.5" width="10" height="9" rx="1" fill="#c8c8c8" stroke="#b0b0b0"/><rect x="360.5" y="50" width="5.5" height="5" fill="#e8e8e8" stroke="#b8b8b8" stroke-width="0.8"/>
<path d="M372,50 L373.5,45 H376 V48 H378 V45 H380.5 L382,50 V55 H378.5 V51 H375.5 V55 H372 Z" fill="#111"/><rect x="374" y="52.5" width="0.8" height="1.5" fill="#fff"/><rect x="379.5" y="52.5" width="0.8" height="1.5" fill="#fff"/>
<path d="M394.5,54.5 V50 L397,47 V45 H402 L405.5,48.5 V54.5 Z" fill="#f4f4f4" stroke="#222" stroke-width="1"/><line x1="396" y1="50" x2="405" y2="50" stroke="#444"/>
<path d="M413.5,48 L414.5,44.5 H421 L420.5,48 Z" fill="#e8e8e8" stroke="#333" stroke-width="0.8"/>
<path d="M411.5,49 Q411.5,48 413,48 H422 Q423.5,48 423.5,49.5 V54.5 H411.5 Z" fill="#d8d8d8" stroke="#222" stroke-width="1"/><rect x="415" y="51" width="4" height="1.3" fill="#d0c000"/><line x1="412" y1="52.5" x2="423" y2="52.5" stroke="#555" stroke-width="0.7"/>
<path d="M436,53 L441,45.5 L443,46 L438,54 Z" fill="#a8a8a8"/><path d="M436,54.5 H447" stroke="#9a9a9a" fill="none" stroke-width="1" stroke-width="1.2"/>
<path d="M459,44 V50 M453.5,50 H464.5 M455,50 L459,54.5 L463,50" stroke="#9a9a9a" fill="none" stroke-width="1"/>
<rect x="470.5" y="45.5" width="11" height="7" rx="1.5" stroke="#9a9a9a" fill="none" stroke-width="1"/><path d="M476,52.5 V55.5 M474,47.5 V50.5 M474,47.5 H478 V50.5" stroke="#9a9a9a" fill="none" stroke-width="1" stroke-width="0.8"/>
<path d="M494,44.5 L496.5,47 L490.5,50 L496.5,53 L493.5,56" stroke="#9a9a9a" fill="none" stroke-width="1"/>
<path d="M509,44 V48.5 M509,51.5 V56 M505,48.5 H513 M505,51.5 H513" stroke="#9a9a9a" fill="none" stroke-width="1"/>
<path d="M525,44.5 Q529,45.5 526,50 Q529.5,52 525,55.5" stroke="#9a9a9a" fill="none" stroke-width="1"/>
<path d="M538.5,47.5 H551 M540.5,47.5 L545,53 L549.5,47.5 M538.5,53 H551 M545,44 V56" stroke="#9a9a9a" fill="none" stroke-width="1"/>
<path d="M556.5,46 H560.5 Q565,46 565,50 Q565,54 560.5,54 H556.5 Z M554.5,48 H556.5 M554.5,52 H556.5 M565,50 H567" stroke="#9a9a9a" fill="none" stroke-width="1"/>
<path d="M574,50 L572.5,48 L574,47 L576.5,49 V45 L578,44.5 L579,46 L580,44.5 L581.5,45.5 L582,47 L583.5,47 L584.5,49 L583,53 L580,55.5 H576.5 L573.5,52.5 Z" stroke="#9a9a9a" fill="none" stroke-width="1"/>
<path d="M593,46 L590.5,50 L593,54" stroke="#9a9a9a" fill="none" stroke-width="1"/>
<rect x="12" y="24" width="10" height="10.5" fill="#c4c4c4"/><path d="M9.8,24 V35.5 M9.5,35.3 H22" stroke="#111" stroke-width="1.8" stroke-dasharray="1.3 1"/>
<path d="M10.8,31 Q13,26.2 15.5,28 T21.8,25.5" fill="none" stroke="#f00" stroke-width="2"/>
<path d="M17.5,67.5 V74 M15,70.5 H17.5" stroke="#0000f0" stroke-width="2.2"/><path d="M18.5,68.5 L22.5,65 M18.5,73 L23,77" stroke="#0000f0" stroke-width="1.3"/><path d="M21,75 L23.5,77.5 L20.5,77.5 Z" fill="#0000f0"/>
<rect x="144" y="64" width="9" height="10.5" fill="#c4c4c4"/><path d="M141.5,64 V75.5 M141.5,75.5 H153" stroke="#111" stroke-width="1.4" stroke-dasharray="1.2 1"/>
<path d="M142.3,71 Q144.5,66.8 147,68.6 T152.8,65.8" fill="none" stroke="#f00" stroke-width="1.9"/>
<path d="M10.4,7 H18.2 L17.2,9.2 H15.6 L13.1,15 H5.9 L7.1,13 Z" fill="#a80a0a"/>
<ellipse cx="12.3" cy="11.4" rx="1.3" ry="3.0" transform="rotate(16 12.3 11.4)" fill="#e6e6e6"/><path d="M10.4,7 L11.9,7 L11,8.6 Z" fill="#d8d8d8"/>
<rect x="555.5" y="32.5" width="5" height="1.6" fill="#505050"/>
<path d="M570.5,28.5 h5 v3.5 h-5 z M572.5,26.5 h4.5 v3.5" fill="none" stroke="#505050" stroke-width="1"/><rect x="570.5" y="28.5" width="5" height="1" fill="#505050"/>
<path d="M585.5,27.5 L590,32.5 M590,27.5 L585.5,32.5" stroke="#505050" stroke-width="1.3"/>
<rect x="524.5" y="7" width="9" height="3.2" rx="1.6" fill="#fff" stroke="#50545a" stroke-width="1"/>
<rect x="544.5" y="3.8" width="8.5" height="6.6" rx="1" fill="#f0f0f0" stroke="#50545a" stroke-width="1.2"/><rect x="547" y="5.8" width="3.5" height="2.6" fill="#fff" stroke="#50545a" stroke-width="1"/>
<path d="M573.5,3.8 L580.5,10.2 M580.5,3.8 L573.5,10.2" stroke="#6a3028" stroke-width="3.2" opacity="0.55"/><path d="M573.5,3.8 L580.5,10.2 M580.5,3.8 L573.5,10.2" stroke="#fff" stroke-width="2.1"/>
<g fill="#b8b8b8"><rect x="590" y="437" width="1" height="1"/><rect x="588" y="439" width="1" height="1"/><rect x="590" y="439" width="1" height="1"/><rect x="586" y="441" width="1" height="1"/><rect x="588" y="441" width="1" height="1"/><rect x="590" y="441" width="1" height="1"/></g>
</svg>
<div class="a" style="left:275px;top:159px;width:78px;height:24px;background:rgba(255,255,255,0.8)"></div>
<div class="t" style="left:22.00px;top:5.47px;font-size:11.5px;line-height:11.5px;color:#1e1e1e;transform:scaleX(0.8600);">LTspice IV - [Tran_INVAMP_6dB_LT1128]</div>
<div class="t" style="left:27.50px;top:23.69px;font-size:11px;line-height:11px;color:#000;transform:scaleX(0.8169);"><u>F</u>ile</div>
<div class="t" style="left:52.50px;top:23.69px;font-size:11px;line-height:11px;color:#000;transform:scaleX(0.8877);"><u>V</u>iew</div>
<div class="t" style="left:84.00px;top:23.69px;font-size:11px;line-height:11px;color:#000;transform:scaleX(0.8986);"><u>P</u>lot Settings</div>
<div class="t" style="left:150.00px;top:23.69px;font-size:11px;line-height:11px;color:#000;transform:scaleX(0.8954);"><u>S</u>imulation</div>
<div class="t" style="left:207.50px;top:23.69px;font-size:11px;line-height:11px;color:#000;transform:scaleX(0.8564);"><u>T</u>ools</div>
<div class="t" style="left:240.00px;top:23.69px;font-size:11px;line-height:11px;color:#000;transform:scaleX(0.8687);"><u>W</u>indow</div>
<div class="t" style="left:285.00px;top:23.69px;font-size:11px;line-height:11px;color:#000;transform:scaleX(0.8657);"><u>H</u>elp</div>
<div class="t" style="left:30.00px;top:64.69px;font-size:11px;line-height:11px;color:#000;transform:scaleX(0.7363);">Tran_INVAMP_6dB_LT1128</div>
<div class="t" style="left:157.00px;top:64.69px;font-size:11px;line-height:11px;color:#000;transform:scaleX(0.7363);">Tran_INVAMP_6dB_LT1128</div>
<div class="t" style="left:296.90px;top:83.89px;font-size:11px;line-height:11px;color:#3030ff;transform:scaleX(0.8648);">V(out1)</div>
<div class="t" style="left:296.90px;top:246.49px;font-size:11px;line-height:11px;color:#ff2a2a;transform:scaleX(0.8648);">V(out2)</div>
<div class="t" style="left:22.21px;top:91.29px;font-size:11px;line-height:11px;color:#000;transform:scaleX(0.8300);">1.5V</div>
<div class="t" style="left:22.21px;top:115.79px;font-size:11px;line-height:11px;color:#000;transform:scaleX(0.8300);">1.0V</div>
<div class="t" style="left:22.21px;top:140.29px;font-size:11px;line-height:11px;color:#000;transform:scaleX(0.8300);">0.5V</div>
<div class="t" style="left:22.21px;top:164.79px;font-size:11px;line-height:11px;color:#000;transform:scaleX(0.8300);">0.0V</div>
<div class="t" style="left:19.17px;top:189.29px;font-size:11px;line-height:11px;color:#000;transform:scaleX(0.8300);">-0.5V</div>
<div class="t" style="left:19.17px;top:213.79px;font-size:11px;line-height:11px;color:#000;transform:scaleX(0.8300);">-1.0V</div>
<div class="t" style="left:19.17px;top:238.29px;font-size:11px;line-height:11px;color:#000;transform:scaleX(0.8300);">-1.5V</div>
<div class="t" style="left:10.85px;top:254.29px;font-size:11px;line-height:11px;color:#959595;transform:scaleX(0.8650);">500mV</div>
<div class="t" style="left:10.85px;top:269.29px;font-size:11px;line-height:11px;color:#959595;transform:scaleX(0.8650);">400mV</div>
<div class="t" style="left:10.85px;top:284.29px;font-size:11px;line-height:11px;color:#959595;transform:scaleX(0.8650);">300mV</div>
<div class="t" style="left:10.85px;top:299.29px;font-size:11px;line-height:11px;color:#959595;transform:scaleX(0.8650);">200mV</div>
<div class="t" style="left:10.85px;top:314.29px;font-size:11px;line-height:11px;color:#959595;transform:scaleX(0.8650);">100mV</div>
<div class="t" style="left:21.43px;top:329.29px;font-size:11px;line-height:11px;color:#959595;transform:scaleX(0.8650);">0mV</div>
<div class="t" style="left:7.67px;top:344.29px;font-size:11px;line-height:11px;color:#959595;transform:scaleX(0.8650);">-100mV</div>
<div class="t" style="left:7.67px;top:359.29px;font-size:11px;line-height:11px;color:#959595;transform:scaleX(0.8650);">-200mV</div>
<div class="t" style="left:7.67px;top:374.29px;font-size:11px;line-height:11px;color:#959595;transform:scaleX(0.8650);">-300mV</div>
<div class="t" style="left:7.67px;top:389.29px;font-size:11px;line-height:11px;color:#959595;transform:scaleX(0.8650);">-400mV</div>
<div class="t" style="left:7.67px;top:404.29px;font-size:11px;line-height:11px;color:#959595;transform:scaleX(0.8650);">-500mV</div>
<div class="t" style="left:39.37px;top:415.69px;font-size:11px;line-height:11px;color:#909090;transform:scaleX(0.8600);">0us</div>
<div class="t" style="left:125.41px;top:415.69px;font-size:11px;line-height:11px;color:#909090;transform:scaleX(0.8600);">50us</div>
<div class="t" style="left:211.44px;top:415.69px;font-size:11px;line-height:11px;color:#909090;transform:scaleX(0.8600);">100us</div>
<div class="t" style="left:300.11px;top:415.69px;font-size:11px;line-height:11px;color:#909090;transform:scaleX(0.8600);">150us</div>
<div class="t" style="left:388.77px;top:415.69px;font-size:11px;line-height:11px;color:#909090;transform:scaleX(0.8600);">200us</div>
<div class="t" style="left:477.44px;top:415.69px;font-size:11px;line-height:11px;color:#909090;transform:scaleX(0.8600);">250us</div>
<div class="t" style="left:54.50px;top:101.84px;font-size:12px;line-height:12px;color:#000;transform:scaleX(1.0000);-webkit-text-stroke:0.15px #000">回路(a)</div>
<div class="t" style="left:260.30px;top:101.84px;font-size:12px;line-height:12px;color:#000;transform:scaleX(1.0000);-webkit-text-stroke:0.15px #000">発振周波数：約1.1MHz</div>
<div class="t" style="left:54.50px;top:263.84px;font-size:12px;line-height:12px;color:#000;transform:scaleX(1.0000);-webkit-text-stroke:0.15px #000">回路(b)</div>
<div class="t" style="left:290.50px;top:329.34px;font-size:12px;line-height:12px;color:#000;transform:scaleX(1.0200);-webkit-text-stroke:0.2px #000">±200mV</div>
<div class="t" style="left:278.50px;top:165.04px;font-size:12px;line-height:12px;color:#000;transform:scaleX(0.9653);-webkit-text-stroke:0.15px #000">発振している</div>
</body></html>
